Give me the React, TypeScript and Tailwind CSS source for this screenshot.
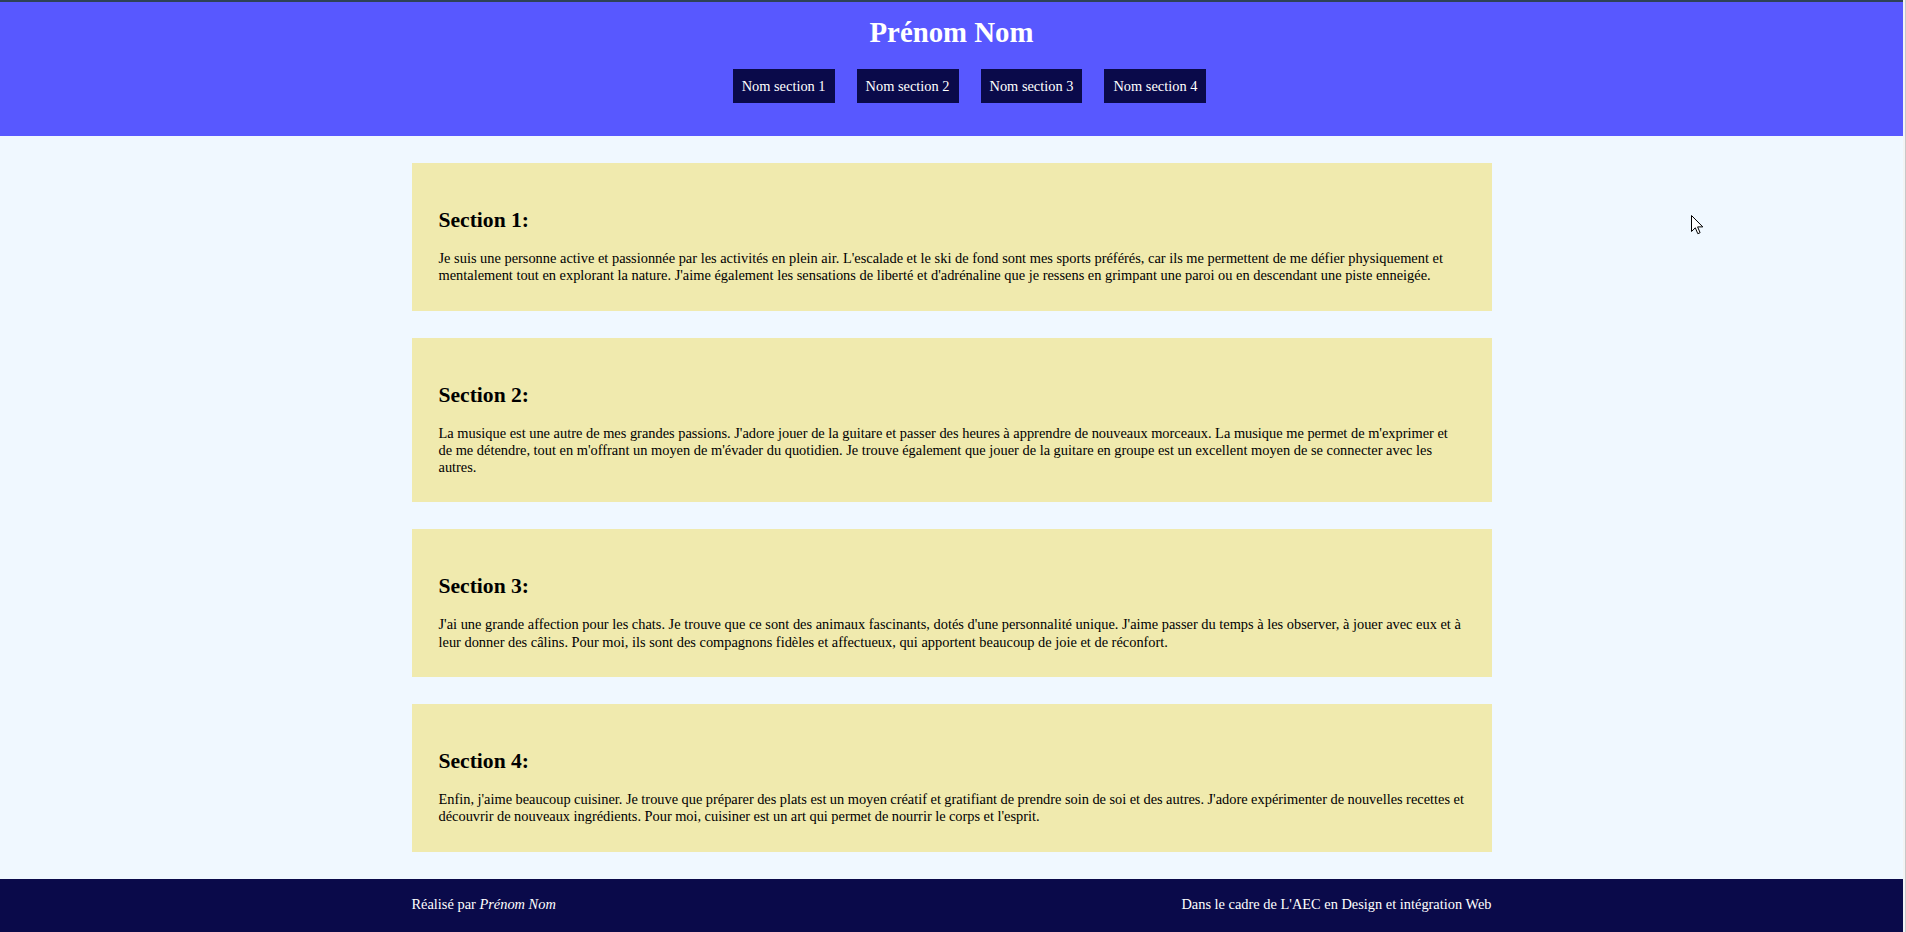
export default function App() {
  const sections = [
    {
      title: "Section 1:",
      text: "Je suis une personne active et passionnée par les activités en plein air. L'escalade et le ski de fond sont mes sports préférés, car ils me permettent de me défier physiquement et mentalement tout en explorant la nature. J'aime également les sensations de liberté et d'adrénaline que je ressens en grimpant une paroi ou en descendant une piste enneigée.",
      tight: false,
    },
    {
      title: "Section 2:",
      text: "La musique est une autre de mes grandes passions. J'adore jouer de la guitare et passer des heures à apprendre de nouveaux morceaux. La musique me permet de m'exprimer et de me détendre, tout en m'offrant un moyen de m'évader du quotidien. Je trouve également que jouer de la guitare en groupe est un excellent moyen de se connecter avec les autres.",
      tight: false,
    },
    {
      title: "Section 3:",
      text: "J'ai une grande affection pour les chats. Je trouve que ce sont des animaux fascinants, dotés d'une personnalité unique. J'aime passer du temps à les observer, à jouer avec eux et à leur donner des câlins. Pour moi, ils sont des compagnons fidèles et affectueux, qui apportent beaucoup de joie et de réconfort.",
      tight: false,
    },
    {
      title: "Section 4:",
      text: "Enfin, j'aime beaucoup cuisiner. Je trouve que préparer des plats est un moyen créatif et gratifiant de prendre soin de soi et des autres. J'adore expérimenter de nouvelles recettes et découvrir de nouveaux ingrédients. Pour moi, cuisiner est un art qui permet de nourrir le corps et l'esprit.",
      tight: true,
    },
  ];

  const navItems = ["Nom section 1", "Nom section 2", "Nom section 3", "Nom section 4"];

  return (
    <div className="relative flex min-h-[932px] bg-[#f0f8ff] font-['Liberation_Serif',serif] text-[14.4px] leading-[17px] text-black">
      <div className="flex flex-1 flex-col">
        {/* window edge */}
        <div className="h-[2px] bg-[#2e4256]" />

        <header className="flex h-[134px] flex-col items-center bg-[#5858ff] pt-[14px]">
          <h1 className="text-[28.8px] font-bold leading-[33px] text-white">Prénom Nom</h1>
          <nav className="mt-[20px] flex gap-[22px] pl-[36px]">
            {navItems.map((item) => (
              <a
                key={item}
                href="#"
                className="flex h-[34px] items-center bg-[#0a0a4a] px-[9px] text-white"
              >
                {item}
              </a>
            ))}
          </nav>
        </header>

        <main className="flex flex-col items-center gap-[27px] py-[27px]">
          {sections.map((s) => (
            <section key={s.title} className="w-[1080px] bg-[#f0eaae] px-[27px] pt-[45px] pb-[26px]">
              <h2 className="text-[21.6px] font-bold leading-[25px]">{s.title}</h2>
              <p className={`mt-[17px] leading-[17.3px] ${s.tight ? "[word-spacing:-0.15px]" : ""}`}>
                {s.text}
              </p>
            </section>
          ))}
        </main>

        <footer className="h-[54px] bg-[#0a0a4a] pt-[17px] text-white">
          <div className="mx-auto flex w-[1080px] justify-between">
            <span>
              Réalisé par <em>Prénom Nom</em>
            </span>
            <span>Dans le cadre de L'AEC en Design et intégration Web</span>
          </div>
        </footer>
      </div>

      {/* scrollbar remnant */}
      <div className="w-[3px] border-r border-[#c8c8c8] bg-[#f3f3f3]" />

      {/* mouse pointer */}
      <svg
        className="absolute left-[1691px] top-[215px]"
        width="13"
        height="20"
        viewBox="0 0 13 20"
      >
        <path
          d="M0.5 0.5 L0.5 16.5 L4.3 12.8 L6.8 18.7 L9.1 17.7 L6.6 11.9 L11.8 11.9 Z"
          fill="white"
          stroke="black"
          strokeWidth="1"
          strokeLinejoin="miter"
        />
      </svg>
    </div>
  );
}
